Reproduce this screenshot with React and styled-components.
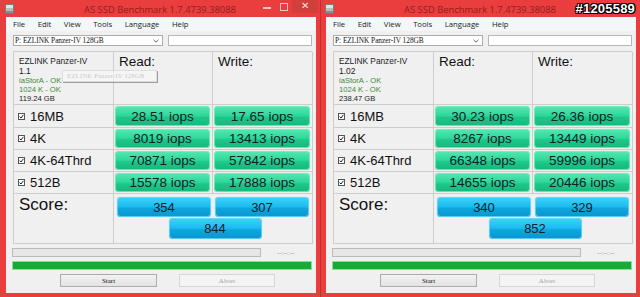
import React from "react";
import styled, { createGlobalStyle } from "styled-components";

const GlobalStyle = createGlobalStyle`
  html, body {
    margin: 0;
    padding: 0;
    background: #ea3d3d;
  }
  body {
    width: 640px;
    height: 297px;
    overflow: hidden;
    font-family: "Liberation Sans", Arial, sans-serif;
  }
`;

const Desktop = styled.div`
  display: flex;
  width: 640px;
  height: 297px;
`;

const Window = styled.div`
  position: relative;
  width: 320px;
  height: 297px;
  box-sizing: border-box;
  display: flex;
  flex-direction: column;
  background: #ea3d3d;
  box-shadow: ${(p) => (p.$edge ? "inset 1px 0 0 #c92c2c" : "none")};
`;

const TitleBar = styled.div`
  height: 18px;
  display: grid;
  grid-template-columns: 1fr auto 1fr;
  align-items: center;
`;

const AppIcon = styled.svg`
  margin-left: 5px;
  display: block;
`;

const Title = styled.div`
  font-family: "Open Sans", "Noto Sans", sans-serif;
  font-size: 9.4px;
  color: #8f1f1f;
  padding-top: 2px;
  white-space: nowrap;
`;

const Controls = styled.div`
  justify-self: end;
  align-self: start;
  display: flex;
  align-items: flex-start;
  margin-right: 2px;
`;

const Minimize = styled.span`
  width: 8px;
  height: 2px;
  margin-top: 7px;
  background: #f6c2c2;
`;

const Maximize = styled.span`
  width: 6px;
  height: 6px;
  margin: 3px 0 0 9px;
  border: 1px solid #f6c2c2;
`;

const Close = styled.span`
  width: 26px;
  height: 13px;
  margin-left: 4px;
  background: #d1403b;
  color: #fbe0e0;
  font-size: 10px;
  line-height: 12px;
  text-align: center;
`;

const Watermark = styled.div`
  position: absolute;
  top: 1px;
  right: 5px;
  font-family: "Liberation Sans", Arial, sans-serif;
  font-weight: bold;
  font-size: 13px;
  color: #fff;
  letter-spacing: 0.2px;
  text-shadow: -1px -1px 0 #000, 1px -1px 0 #000, -1px 1px 0 #000, 1px 1px 0 #000,
    0 1px 0 #000, 0 -1px 0 #000, 1px 0 0 #000, -1px 0 0 #000;
`;

const Client = styled.div`
  flex: 1;
  margin: 0 4px 4px 6px;
  display: flex;
  flex-direction: column;
  background: #f0f0f0;
`;

const MenuBar = styled.div`
  height: 14px;
  display: flex;
  align-items: center;
  gap: 12.5px;
  padding-left: 7px;
  background: #f5f6f7;
  font-family: "Open Sans", "Noto Sans", sans-serif;
  font-size: 7.7px;
  color: #222;
`;

const Content = styled.div`
  display: flex;
  flex-direction: column;
  padding: 0 4px 6px 7px;
`;

const DriveRow = styled.div`
  display: flex;
  gap: 5px;
  height: 11px;
  margin-top: 4px;
`;

const DriveSelect = styled.div`
  width: 150px;
  box-sizing: border-box;
  border: 1px solid #acacac;
  background: #fff;
  display: flex;
  align-items: center;
  justify-content: space-between;
  padding: 0 3px 0 1px;
  font-family: "Liberation Serif", "Times New Roman", serif;
  font-size: 7.3px;
  color: #111;
  white-space: nowrap;
`;

const TextBox = styled.div`
  flex: 1;
  box-sizing: border-box;
  border: 1px solid #b5b7bd;
  background: #fff;
`;

const Table = styled.div`
  display: grid;
  grid-template-columns: 100px 99px 100px;
  grid-template-rows: 53px 23px 22px 22px 22px;
  margin-top: 5px;
  border-top: 1px solid #cdcdcd;
  border-left: 1px solid #cdcdcd;
`;

const Cell = styled.div`
  box-sizing: border-box;
  border-right: 1px solid #cdcdcd;
  border-bottom: 1px solid #cdcdcd;
  display: flex;
  min-width: 0;
`;

const InfoCell = styled(Cell)`
  flex-direction: column;
  padding: 4px 0 0 5px;
  color: #222;
  white-space: nowrap;
`;

const InfoName = styled.div`
  font-size: 8.3px;
  line-height: 11px;
`;

const InfoLine = styled.div`
  font-size: ${(p) => (p.$big ? "8.5px" : "7.6px")};
  line-height: 9px;
  color: ${(p) => (p.$ok ? "#3a8c35" : "#222")};
`;

const HeadCell = styled(Cell)`
  padding: 2px 0 0 5px;
  font-size: 13.5px;
  color: #111;
`;

const LabelCell = styled(Cell)`
  align-items: center;
  gap: 5px;
  padding-left: 4px;
  font-size: 13px;
  color: #111;
`;

const ValueCell = styled(Cell)`
  padding: 1px 2px 1px 1px;
`;

const Pill = styled.div`
  flex: 1;
  box-sizing: border-box;
  border-radius: 4px;
  display: flex;
  align-items: center;
  justify-content: center;
  color: #10202a;
  font-size: ${(p) => (p.$blue ? "13px" : "13.5px")};
  white-space: nowrap;
  background: ${(p) =>
    p.$blue
      ? "linear-gradient(#3fd2fa 0%, #1cbcf0 48%, #0ea6de 56%, #0a96cf 100%)"
      : "linear-gradient(#55e8b2 0%, #2fd89a 48%, #1ec98a 56%, #16b57c 100%)"};
  box-shadow: ${(p) =>
    p.$blue
      ? "inset 0 0 0 1px rgba(110, 215, 250, 0.8), 0 0 1px #8fd8f0"
      : "inset 0 0 0 1px rgba(120, 240, 190, 0.8), 0 0 1px #9ee6c6"};
`;

const ScoreBox = styled.div`
  display: grid;
  grid-template-columns: 100px 199px;
  height: 50px;
  border-left: 1px solid #cdcdcd;
`;

const ScoreLabel = styled(Cell)`
  padding: 1px 0 0 5px;
  font-size: 17px;
  color: #111;
`;

const ScoreCell = styled(Cell)`
  padding: 3px 3px 3px 3px;
`;

const ScoreGrid = styled.div`
  flex: 1;
  display: grid;
  grid-template-columns: 94px 94px;
  grid-template-rows: 20px 21px;
  column-gap: 4px;
  row-gap: 1px;
`;

const TotalPill = styled(Pill)`
  grid-column: 1 / span 2;
  justify-self: center;
  width: 93px;
  margin-left: 4px;
`;

const ProgressRow = styled.div`
  display: flex;
  align-items: center;
  margin: 4px 0 0 -1px;
  height: 9px;
`;

const ProgressBar = styled.div`
  width: 249px;
  height: 9px;
  box-sizing: border-box;
  border: 1px solid #bcbcbc;
  background: #e6e6e6;
`;

const Elapsed = styled.span`
  margin-left: 16px;
  font-size: 6px;
  color: #777;
  letter-spacing: 0.3px;
`;

const DoneBar = styled.div`
  height: 9px;
  margin: 4px 0 0 -1px;
  box-sizing: border-box;
  border: 1px solid #8fdc98;
  background: #16aa36;
`;

const ButtonRow = styled.div`
  display: flex;
  gap: 22px;
  margin: 4px 0 0 47px;
  height: 13px;
`;

const Button = styled.div`
  width: ${(p) => p.$w}px;
  box-sizing: border-box;
  display: flex;
  align-items: center;
  justify-content: center;
  font-family: "Liberation Serif", "Times New Roman", serif;
  font-size: 7px;
  color: ${(p) => (p.$disabled ? "#a2a2a2" : "#111")};
  border: 1px solid ${(p) => (p.$disabled ? "#d6d6d6" : "#acacac")};
  background: ${(p) =>
    p.$disabled ? "#f4f4f4" : "linear-gradient(#f2f2f2, #e3e3e3)"};
`;

const Tooltip = styled.div`
  position: absolute;
  left: 62px;
  top: 70px;
  width: 95px;
  height: 12px;
  box-sizing: border-box;
  background: rgba(250, 250, 250, 0.55);
  border: 1px solid rgba(150, 150, 150, 0.25);
  box-shadow: 1px 1px 0 rgba(60, 60, 60, 0.45);
  font-family: "Liberation Serif", "Times New Roman", serif;
  font-size: 7px;
  line-height: 10px;
  padding-left: 4px;
  color: rgba(140, 140, 140, 0.45);
  white-space: nowrap;
`;

const DriveIcon = () => (
  <AppIcon width="9" height="10" viewBox="0 0 9 10">
    <rect x="0.5" y="0.5" width="8" height="9" fill="#bdbdbd" stroke="#7a7a7a" />
    <rect x="1" y="1" width="7" height="3" fill="#e4e4e4" />
    <rect x="1" y="7" width="7" height="2" fill="#8a8a8a" />
  </AppIcon>
);

const Check = () => (
  <svg width="7" height="7" viewBox="0 0 7 7" style={{ flex: "none" }}>
    <rect x="0.5" y="0.5" width="6" height="6" fill="#fff" stroke="#555" />
    <path d="M1.6 3.6 L3 5 L5.4 1.8" fill="none" stroke="#222" strokeWidth="1" />
  </svg>
);

const Chevron = () => (
  <svg width="6" height="4" viewBox="0 0 6 4">
    <path d="M0.5 0.8 L3 3.2 L5.5 0.8" fill="none" stroke="#555" strokeWidth="0.9" />
  </svg>
);

const WINDOWS = [
  {
    name: "EZLINK Panzer-IV",
    fw: "1.1",
    size: "119.24 GB",
    rows: [
      ["16MB", "28.51 iops", "17.65 iops"],
      ["4K", "8019 iops", "13413 iops"],
      ["4K-64Thrd", "70871 iops", "57842 iops"],
      ["512B", "15578 iops", "17888 iops"],
    ],
    score: ["354", "307", "844"],
    controls: true,
    tooltip: true,
  },
  {
    name: "EZLINK Panzer-IV",
    fw: "1.02",
    size: "238.47 GB",
    rows: [
      ["16MB", "30.23 iops", "26.36 iops"],
      ["4K", "8267 iops", "13449 iops"],
      ["4K-64Thrd", "66348 iops", "59996 iops"],
      ["512B", "14655 iops", "20446 iops"],
    ],
    score: ["340", "329", "852"],
    watermark: "#1205589",
  },
];

const MENU = ["File", "Edit", "View", "Tools", "Language", "Help"];

const BenchWindow = ({ data, edge }) => (
  <Window $edge={edge}>
    <TitleBar>
      <DriveIcon />
      <Title>AS SSD Benchmark 1.7.4739.38088</Title>
      {data.controls ? (
        <Controls>
          <Minimize />
          <Maximize />
          <Close>✕</Close>
        </Controls>
      ) : (
        <span />
      )}
    </TitleBar>
    {data.watermark && <Watermark>{data.watermark}</Watermark>}

    <Client>
      <MenuBar>
        {MENU.map((m) => (
          <span key={m}>{m}</span>
        ))}
      </MenuBar>
      <Content>
        <DriveRow>
          <DriveSelect>
            <span>P: EZLINK Panzer-IV 128GB</span>
            <Chevron />
          </DriveSelect>
          <TextBox />
        </DriveRow>

        <Table>
          <InfoCell>
            <InfoName>{data.name}</InfoName>
            <InfoLine $big>{data.fw}</InfoLine>
            <InfoLine $ok>iaStorA - OK</InfoLine>
            <InfoLine $ok>1024 K - OK</InfoLine>
            <InfoLine>{data.size}</InfoLine>
          </InfoCell>
          <HeadCell>Read:</HeadCell>
          <HeadCell>Write:</HeadCell>
          {data.rows.map(([label, read, write]) => (
            <React.Fragment key={label}>
              <LabelCell>
                <Check />
                {label}
              </LabelCell>
              <ValueCell>
                <Pill>{read}</Pill>
              </ValueCell>
              <ValueCell>
                <Pill>{write}</Pill>
              </ValueCell>
            </React.Fragment>
          ))}
        </Table>

        <ScoreBox>
          <ScoreLabel>Score:</ScoreLabel>
          <ScoreCell>
            <ScoreGrid>
              <Pill $blue>{data.score[0]}</Pill>
              <Pill $blue>{data.score[1]}</Pill>
              <TotalPill $blue>{data.score[2]}</TotalPill>
            </ScoreGrid>
          </ScoreCell>
        </ScoreBox>

        <ProgressRow>
          <ProgressBar />
          <Elapsed>--:--:--</Elapsed>
        </ProgressRow>
        <DoneBar />

        <ButtonRow>
          <Button $w={97}>Start</Button>
          <Button $w={96} $disabled>
            Abort
          </Button>
        </ButtonRow>
      </Content>
    </Client>

    {data.tooltip && <Tooltip>EZLINK Panzer-IV 128GB</Tooltip>}
  </Window>
);

const App = () => (
  <>
    <GlobalStyle />
    <Desktop>
      {WINDOWS.map((w, i) => (
        <BenchWindow key={i} data={w} edge={i > 0} />
      ))}
    </Desktop>
  </>
);

export default App;
